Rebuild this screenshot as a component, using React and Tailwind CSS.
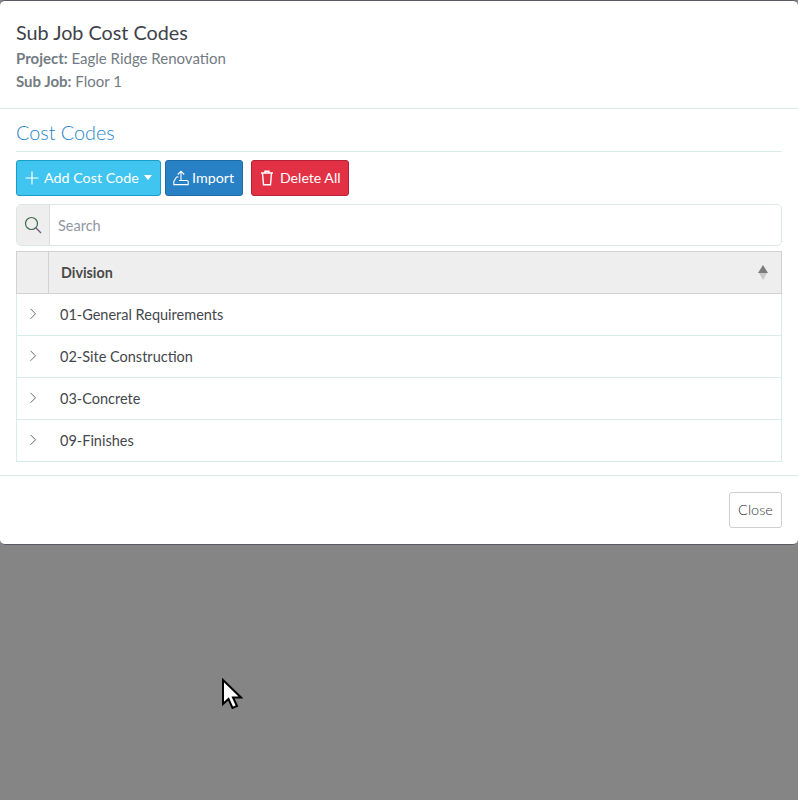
import React from "react";

const rows = ["01-General Requirements", "02-Site Construction", "03-Concrete", "09-Finishes"];

function Chevron() {
  return (
    <svg width="8" height="12" viewBox="0 0 8 12" fill="none" stroke="#62666c" strokeWidth="1" className="block">
      <path d="M1.5 0.8 L6.5 5.8 L1.5 10.8" />
    </svg>
  );
}

export default function App() {
  return (
    <div className="relative w-[798px] h-[800px] overflow-hidden bg-[#858585] font-['Lato',sans-serif]">
      <div className="h-[545px] bg-white rounded-[5px] border-t border-b border-[#5c5866] flex flex-col">
        <div className="h-[108px] border-b border-[#d8ecea] px-4 pt-[17px]">
          <div className="text-[19.8px] leading-[28px] text-[#3e4249]">Sub Job Cost Codes</div>
          <div className="mt-[1px] text-[15px] leading-[23px] text-[#737b84]"><b className="font-bold">Project:</b> Eagle Ridge Renovation</div>
          <div className="text-[15px] leading-[23px] text-[#737b84]"><b className="font-bold">Sub Job:</b> Floor 1</div>
        </div>
        <div className="px-4 flex-1">
          <div className="h-[43px] pt-[10px] border-b border-[#d8ecea] text-[19.8px] leading-[26px] font-light text-[#1f84c6]">Cost Codes</div>
          <div className="mt-2 flex h-9">
            <button className="w-[145px] h-9 rounded-[3px] bg-[#40c4f0] border border-[#1a9cc4] text-white text-[14.3px] flex items-center pl-[8px]">
              <svg width="14" height="14" viewBox="0 0 14 14" stroke="#fff" strokeWidth="1.2" fill="none"><path d="M7 0.5V13.5M0.5 7H13.5" /></svg>
              <span className="ml-[5px]">Add Cost Code</span>
              <span className="ml-[5px] w-0 h-0 border-x-[4.5px] border-x-transparent border-t-[5px] border-t-white mb-[2px]" />
            </button>
            <button className="ml-1 w-[78px] h-9 rounded-[3px] bg-[#2881c4] border border-[#1d6aa5] text-white text-[14.3px] flex items-center pl-[7px]">
              <svg width="16" height="16" viewBox="0 0 16 16" stroke="#fff" strokeWidth="1.1" fill="none">
                <path d="M8 10.5V1.5M4.8 4.5L8 1.2L11.2 4.5" />
                <path d="M5.5 7H3.5L0.8 11.5V14.6H15.2V11.5Q15.2 10.5 14 10.5H6" />
              </svg>
              <span className="ml-[3px]">Import</span>
            </button>
            <button className="ml-2 w-[98px] h-9 rounded-[3px] bg-[#e23145] border border-[#b52233] text-white text-[14.1px] flex items-center pl-[8px]">
              <svg width="14" height="16" viewBox="0 0 14 16" stroke="#fff" strokeWidth="1.4" fill="none">
                <path d="M1 3H13M5 3V1.2H9V3M2.5 3L3.5 14.8H10.5L11.5 3" />
              </svg>
              <span className="ml-[6px]">Delete All</span>
            </button>
          </div>
          <div className="mt-2 h-[42px] flex border border-[#dce6e6] rounded-[5px] overflow-hidden">
            <div className="w-[33px] bg-[#eeeeee] border-r border-[#dcdcdc] flex items-center justify-center">
              <svg width="18" height="18" viewBox="0 0 18 18" fill="none">
                <circle cx="7.5" cy="7.5" r="6" stroke="#3f6a55" strokeWidth="1.2" />
                <path d="M12 12L17 17" stroke="#7a4f80" strokeWidth="1.2" />
              </svg>
            </div>
            <div className="flex-1 flex items-center pl-2 pt-[1px] text-[14.5px] text-[#8f979f]">Search</div>
          </div>
          <div className="mt-[5px] border-x border-b border-[#d8ecea]">
            <div className="-mx-px h-[43px] bg-[#eeeeee] border border-[#d2d2d2] flex">
              <div className="w-[32px] border-r border-[#d2d2d2]" />
              <div className="flex-1 flex items-center pl-3 text-[14.3px] font-bold text-[#4a4a48]">Division</div>
              <div className="w-[36px] flex flex-col items-center justify-center">
                <span className="w-0 h-0 border-x-[5px] border-x-transparent border-b-[8px] border-b-[#7c7c7c]" />
                <span className="w-0 h-0 border-x-[4px] border-x-transparent border-t-[7px] border-t-[#c8c8c8]" />
              </div>
            </div>
            {rows.map((r, i) => (
              <div key={r} className={i < 3 ? "h-[42px] flex items-center border-b border-[#d8ecea]" : "h-[41px] flex items-center"}>
                <div className="w-[32px] flex justify-center pb-[1px]"><Chevron /></div>
                <div className="pl-[11px] text-[14.5px] text-[#44474d]">{r}</div>
              </div>
            ))}
          </div>
        </div>
        <div className="h-[69px] border-t border-[#d8ecea] flex justify-end items-start px-4 pt-4">
          <button className="w-[53px] h-9 border border-[#cfcfcf] rounded-[3px] text-[14.5px] font-light text-[#33363b]">Close</button>
        </div>
      </div>
      <svg className="absolute left-[221px] top-[678px]" width="22" height="32" viewBox="0 0 22 32">
        <path d="M2 2V26L7.5 21L11.5 30L16 28L12 19.5H20Z" fill="#fff" stroke="#000" strokeWidth="2" strokeLinejoin="miter" />
      </svg>
    </div>
  );
}
